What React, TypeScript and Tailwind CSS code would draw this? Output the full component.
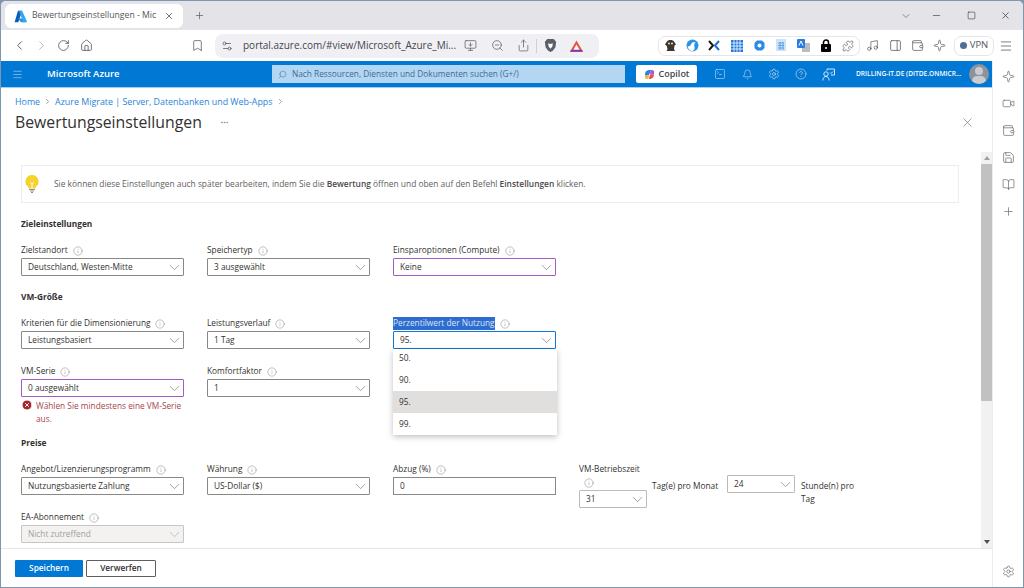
import type { ReactNode } from "react";
import {
  Bell,
  Bookmark,
  BookOpen,
  ChevronDown,
  ChevronLeft,
  ChevronRight,
  CircleHelp,
  Info,
  Menu,
  Minus,
  Music,
  PanelRight,
  Plus,
  Puzzle,
  RotateCw,
  Save,
  Search,
  Settings,
  Settings2,
  Share,
  Square,
  SquareTerminal,
  Video,
  Wallet,
  X,
  XCircle,
  ZoomOut,
  House,
  MonitorDown,
  Ellipsis,
  Sparkle,
} from "lucide-react";

const font = "font-['Open_Sans','Noto_Sans',sans-serif]";

function AzureLogo({ size = 14 }: { size?: number }) {
  return (
    <svg width={size} height={size} viewBox="0 0 18 18">
      <path d="M6.2 1h5.3L6 17H1.9a.9.9 0 0 1-.8-1.2L5.3 1.6A.9.9 0 0 1 6.2 1z" fill="#0a5fb4" />
      <path d="M13.9 11.9H5.5l4.3 5.1H16z" fill="#1f8fe6" />
      <path d="M11.6 1.6A.9.9 0 0 0 10.8 1H6.4a.9.9 0 0 1 .8.6l4.2 11.8 1 2.9a.9.9 0 0 1-.2.7h4.9a.9.9 0 0 0 .8-1.2z" fill="#35a6f0" />
    </svg>
  );
}

function CopilotLogo() {
  return (
    <svg width="11" height="11" viewBox="0 0 12 12">
      <path d="M1 6a5 5 0 0 1 5-5h2L5 7H1z" fill="#2f7fe0" />
      <path d="M8 1h1a2 2 0 0 1 2 2v3H6z" fill="#a65ad8" />
      <path d="M1 7h5l-2 4H3a2 2 0 0 1-2-2z" fill="#f2b632" />
      <path d="M7 6h4a5 5 0 0 1-5 5H5z" fill="#e8553f" />
    </svg>
  );
}

function BraveLogo() {
  return (
    <svg width="13" height="15" viewBox="0 0 14 16">
      <path d="M3.5 1h7l1.6 2 1 1-.8 6-2.8 3.6L7 15l-2.5-1.4L1.7 10 .9 4l1-1z" fill="#5b6068" />
      <path d="M4.5 5.5 7 6.5l2.5-1L9 9l-2 2.5L5 9z" fill="#fff" />
    </svg>
  );
}

function TriangleLogo() {
  return (
    <svg width="15" height="14" viewBox="0 0 16 14">
      <path d="M8 1 15 13H1z" fill="#e8553f" />
      <path d="M8 5.5 11.5 11.5h-7z" fill="#fff" />
      <path d="M1 13h14l-1.5-2h-11z" fill="#7a3ab0" />
    </svg>
  );
}

function ExtensionIcons() {
  return (
    <div className="ml-[59px] flex h-[20px] w-[202px] items-center rounded-[7px] border border-[#e6e6ea] bg-white pl-[1px]">
      <span className="flex w-[22px] justify-center">
        <svg width="13" height="13" viewBox="0 0 13 13">
          <path d="M3 2.5C4 .5 9 .5 10 2.5l2 3-1.500 1-.5 3.500 1 2H2.500l1-2L2.800 7 1 5.500z" fill="#3a3632" />
          <circle cx="5" cy="4.5" r="1" fill="#f3e3c6" />
          <circle cx="8" cy="4.5" r="1" fill="#f3e3c6" />
        </svg>
      </span>
      <span className="flex w-[22px] justify-center">
        <svg width="13" height="13" viewBox="0 0 13 13">
          <circle cx="6.5" cy="6.5" r="6" fill="#2a93e6" />
          <path d="M1.5 7.5C4 7.5 5 6 5.5 4.5 6 3 8 3 9.5 3.5 8 4.500 8 6.500 8.500 8c.4 1.500 0 3-2 4-2.500 0-4.500-1.800-5-4.500z" fill="#fff" />
        </svg>
      </span>
      <span className="flex w-[23px] justify-center">
        <svg width="12" height="11" viewBox="0 0 12 11" fill="none" strokeWidth="2">
          <path d="M1 1l4 4.5L1 10" stroke="#1b1b1b" />
          <path d="M11 1 7 5.5l4 4.5" stroke="#1a6fd0" />
        </svg>
      </span>
      <span className="flex w-[23px] justify-center">
        <svg width="12" height="12" viewBox="0 0 12 12">
          <rect width="12" height="12" fill="#1f78e0" />
          <path d="M3 0v12M6 0v12M9 0v12M0 3h12M0 6h12M0 9h12" stroke="#fff" strokeWidth=".8" />
        </svg>
      </span>
      <span className="flex w-[23px] justify-center">
        <svg width="11" height="11" viewBox="0 0 11 11">
          <path d="M3 .5h5L10.5 3v5L8 10.5H3L.5 8V3z" fill="#2a8be6" />
          <circle cx="5.5" cy="5.5" r="2" fill="#fff" />
        </svg>
      </span>
      <span className="flex w-[23px] justify-center">
        <svg width="11" height="13" viewBox="0 0 11 13">
          <rect width="10" height="12" fill="#cfe3f7" />
          <path d="M2 4h6M2 6.5h6M2 9h6M4 3v8M7 3v8" stroke="#5aa3e6" strokeWidth="1" />
        </svg>
      </span>
      <span className="flex w-[22px] justify-center">
        <svg width="13" height="13" viewBox="0 0 13 13">
          <rect x="5" y="4" width="8" height="9" fill="#b9bcc2" />
          <rect width="8" height="9" rx="1" fill="#2a7ce0" />
          <path d="M2 6.5 4 2l2 4.5" stroke="#fff" fill="none" />
        </svg>
      </span>
      <span className="flex w-[24px] justify-center">
        <svg width="10" height="13" viewBox="0 0 10 13">
          <path d="M2.5 6V3.5a2.500 2.500 0 0 1 5 0V6" fill="none" stroke="#000" strokeWidth="1.5" />
          <rect y="5" width="10" height="8" rx="1" fill="#000" />
          <circle cx="5" cy="9" r="1" fill="#fff" />
        </svg>
      </span>
      <span className="flex w-[22px] justify-center">
        <Puzzle size={12} strokeWidth={1.3} className="text-[#55575c]" />
      </span>
    </div>
  );
}

function Toolbar() {
  const cls = "text-[#55575c]";
  return (
    <div className="flex h-[31px] items-center bg-white pl-[11px]">
      <ChevronLeft size={15} strokeWidth={1.5} className={cls} />
      <ChevronRight size={15} strokeWidth={1.5} className="ml-[7px] text-[#b4b5b9]" />
      <RotateCw size={13} strokeWidth={1.5} className={`ml-[8px] ${cls}`} />
      <House size={13} strokeWidth={1.5} className={`ml-[10px] ${cls}`} />
      <Bookmark size={13} strokeWidth={1.4} className={`ml-[98px] ${cls}`} />
      <div className="ml-[11px] flex h-[24px] w-[384px] items-center rounded-[8px] bg-[#f0f0f4] pl-[6px]">
        <Settings2 size={12} strokeWidth={1.5} className={cls} />
        <span className={`ml-[10px] w-[217px] whitespace-nowrap text-[10px] text-[#44464b] ${font}`}>
          portal.azure.com/#view/Microsoft_Azure_Mi...
        </span>
        <MonitorDown size={13} strokeWidth={1.3} className={`ml-[4px] ${cls}`} />
        <ZoomOut size={13} strokeWidth={1.3} className={`ml-[14px] ${cls}`} />
        <Share size={13} strokeWidth={1.3} className={`ml-[13px] ${cls}`} />
        <span className="ml-[6px] h-[14px] w-px bg-[#d0d0d4]" />
        <span className="ml-[7px] flex"><BraveLogo /></span>
        <span className="ml-[12px] flex"><TriangleLogo /></span>
      </div>
      <ExtensionIcons />
      <Music size={13} strokeWidth={1.3} className={`ml-[6px] ${cls}`} />
      <PanelRight size={13} strokeWidth={1.4} className={`ml-[10px] ${cls}`} />
      <Wallet size={13} strokeWidth={1.3} className={`ml-[9px] ${cls}`} />
      <Sparkle size={13} strokeWidth={1.3} className={`ml-[9px] ${cls}`} />
      <div className={`ml-[8px] flex h-[20px] w-[40px] items-center justify-center gap-[3px] rounded-[7px] border border-[#e6e6ea] text-[9.5px] text-[#55575c] ${font}`}>
        <span className="h-[7px] w-[7px] rounded-full bg-[#4f6d96]" />
        VPN
      </div>
      <Menu size={14} strokeWidth={1.3} className={`ml-[5px] ${cls}`} />
    </div>
  );
}

function TabStrip() {
  return (
    <div className="flex h-[29px] items-center bg-[#e3e3e8]">
      <div className="ml-[4px] mt-[1px] flex h-[24px] w-[178px] items-center rounded-[6px] bg-white pl-[9px]">
        <AzureLogo size={13} />
        <span className={`ml-[5px] w-[128px] overflow-hidden whitespace-nowrap text-[8.7px] text-[#55575c] ${font}`}>
          Bewertungseinstellungen - Mic
        </span>
        <X size={10} strokeWidth={1.8} className="ml-[4px] text-[#44464b]" />
      </div>
      <Plus size={11} strokeWidth={1.5} className="ml-[11px] text-[#55575c]" />
      <div className="flex-1" />
      <ChevronDown size={12} strokeWidth={1.3} className="text-[#55575c]" />
      <Minus size={11} strokeWidth={1.3} className="ml-[19px] text-[#2e2f33]" />
      <Square size={9} strokeWidth={1.5} className="ml-[25px] text-[#2e2f33]" />
      <X size={11} strokeWidth={1.5} className="ml-[24px] mr-[12px] text-[#2e2f33]" />
    </div>
  );
}

function AzureBar() {
  return (
    <div className="flex h-[27px] items-center border-b border-[#a9cdec] bg-[#0078d4] text-white">
      <Menu size={11} strokeWidth={1.3} className="ml-[11px] text-[#bcd9f0]" />
      <span className={`ml-[24px] w-[225px] text-[9.5px] font-semibold ${font}`}>Microsoft Azure</span>
      <div className={`flex h-[18px] w-[353px] items-center bg-[#b3d6f2] pl-[6px] text-[8.3px] text-[#3d6c92] ${font}`}>
        <Search size={9} strokeWidth={1.3} className="-scale-x-100" />
        <span className="ml-[5px]">Nach Ressourcen, Diensten und Dokumenten suchen (G+/)</span>
      </div>
      <div className={`ml-[11px] flex h-[18px] w-[61px] items-center justify-center gap-[4px] rounded-[2px] bg-white text-[9px] font-semibold text-[#41464d] ${font}`}>
        <CopilotLogo />
        Copilot
      </div>
      <SquareTerminal size={12} strokeWidth={1.1} className="ml-[17px] text-[#d6e8f7]" />
      <Bell size={11} strokeWidth={1.2} className="ml-[16px] text-[#d6e8f7]" />
      <Settings size={12} strokeWidth={1.2} className="ml-[15px] text-[#d6e8f7]" />
      <CircleHelp size={12} strokeWidth={1.2} className="ml-[15px] text-[#d6e8f7]" />
      <svg width="13" height="13" viewBox="0 0 13 13" fill="none" stroke="#d6e8f7" className="ml-[15px]">
        <circle cx="4" cy="6" r="2.2" />
        <path d="M.8 12.5c.3-3 1.5-4 3.2-4s2.9 1 3.2 4M5 2.5V1h7.5v6H9" />
        <path d="m8 4.5 1 1 2-2" />
      </svg>
      <span className={`ml-[21px] w-[105px] whitespace-nowrap text-right text-[6.6px] font-semibold ${font}`}>
        DRILLING-IT.DE (DITDE.ONMICR...
      </span>
      <div className="relative ml-[8px] h-[20px] w-[20px] overflow-hidden rounded-full bg-[#8d939b]">
        <div className="absolute left-[6px] top-[3px] h-[8px] w-[8px] rounded-full bg-[#c9ccd1]" />
        <div className="absolute left-[3px] top-[12px] h-[10px] w-[14px] rounded-full bg-[#c9ccd1]" />
      </div>
    </div>
  );
}

function FieldLabel({ children }: { children: ReactNode }) {
  return (
    <div className="flex h-[15px] items-center gap-[5px] whitespace-nowrap text-[8.3px] text-[#323130]">
      {children}
      <Info size={10} strokeWidth={1.1} className="shrink-0 text-[#777]" />
    </div>
  );
}

function Select({
  value,
  border = "border-[#8a8886]",
  disabled = false,
  width = "w-[163px]",
}: {
  value: string;
  border?: string;
  disabled?: boolean;
  width?: string;
}) {
  return (
    <div
      className={`flex h-[18px] ${width} items-center justify-between rounded-[1px] border ${border} pl-[6px] text-[8.3px] ${
        disabled ? "bg-[#f3f2f1] text-[#a19f9d]" : "bg-white text-[#323130]"
      }`}
    >
      <span className="whitespace-nowrap">{value}</span>
      <ChevronDown size={17} strokeWidth={0.8} className={disabled ? "text-[#a19f9d]" : "text-[#605e5c]"} />
    </div>
  );
}

function Field({ label, value, border }: { label: string; value: string; border?: string }) {
  return (
    <div className="w-[163px]">
      <FieldLabel>{label}</FieldLabel>
      <Select value={value} border={border} />
    </div>
  );
}

function Heading({ children, className }: { children: ReactNode; className: string }) {
  return <h2 className={`h-[12px] text-[8.3px] font-bold leading-[12px] text-[#323130] ${className}`}>{children}</h2>;
}

function PercentileField() {
  return (
    <div className="relative w-[163px]">
      <div className="flex h-[15px] items-center gap-[5px] whitespace-nowrap text-[8.3px]">
        <span className="bg-[#2f6ccf] text-[#dbe6f5]">Perzentilwert der Nutzung</span>
        <Info size={10} strokeWidth={1.1} className="shrink-0 text-[#777]" />
      </div>
      <Select value="95." border="border-[#0f78d4]" />
      <ul className="absolute left-0 top-[33px] z-10 w-[164px] bg-white text-[8.3px] text-[#323130] shadow-[0_2px_6px_rgba(0,0,0,0.25)]">
        <li className="flex h-[20px] items-start pl-[6px] pt-[3px]">50.</li>
        <li className="flex h-[22px] items-center pl-[6px]">90.</li>
        <li className="flex h-[22px] items-center bg-[#e1dfdd] pl-[6px]">95.</li>
        <li className="flex h-[22px] items-center pl-[6px]">99.</li>
      </ul>
    </div>
  );
}

function Form() {
  return (
    <div className={`min-w-0 flex-1 overflow-hidden pl-[20px] pt-[13px] ${font}`}>
      <div className="flex h-[38px] w-[938px] items-center border border-[#eeeded] pl-[3px] text-[8.4px] text-[#605e5c]">
        <svg width="14" height="18" viewBox="0 0 14 18" className="shrink-0">
          <path d="M7 0a6.5 6.5 0 0 0-3.5 12v1.5h7V12A6.5 6.5 0 0 0 7 0z" fill="#f8d22a" />
          <path d="M5 7l2 2 2-2M7 9v4" fill="none" stroke="#fff" />
          <path d="M4 14.5h6M5 16h4M6 17.5h2" stroke="#8f8f8f" />
        </svg>
        <span className="ml-[15px]">
          Sie können diese Einstellungen auch später bearbeiten, indem Sie die <b className="font-semibold text-[#4a4a4a]">Bewertung</b> öffnen und oben auf den Befehl <b className="font-semibold text-[#4a4a4a]">Einstellungen</b> klicken.
        </span>
      </div>

      <Heading className="mt-[15px]">Zieleinstellungen</Heading>
      <div className="mt-[13px] flex gap-[23px]">
        <Field label="Zielstandort" value="Deutschland, Westen-Mitte" />
        <Field label="Speichertyp" value="3 ausgewählt" />
        <Field label="Einsparoptionen (Compute)" value="Keine" border="border-[#a55bc4]" />
      </div>

      <Heading className="mt-[15px]">VM-Größe</Heading>
      <div className="mt-[13px] flex gap-[23px]">
        <Field label="Kriterien für die Dimensionierung" value="Leistungsbasiert" />
        <Field label="Leistungsverlauf" value="1 Tag" />
        <PercentileField />
      </div>

      <div className="mt-[15px] flex gap-[23px]">
        <div className="w-[163px]">
          <FieldLabel>VM-Serie</FieldLabel>
          <Select value="0 ausgewählt" border="border-[#a55bc4]" />
          <div className="mt-[2px] flex gap-[3px] text-[8.3px] leading-[13px]">
            <XCircle size={12} fill="#a4262c" stroke="#fff" strokeWidth={2} className="shrink-0" />
            <p className="text-[#a4464c]">
              <span className="block whitespace-nowrap">Wählen Sie mindestens eine VM-Serie</span>
              <span className="block">aus.</span>
            </p>
          </div>
        </div>
        <Field label="Komfortfaktor" value="1" />
      </div>

      <Heading className="mt-[12px]">Preise</Heading>
      <div className="mt-[13px] flex h-[33px] gap-[23px]">
        <Field label="Angebot/Lizenzierungsprogramm" value="Nutzungsbasierte Zahlung" />
        <Field label="Währung" value="US-Dollar ($)" />
        <div className="w-[163px]">
          <FieldLabel>Abzug (%)</FieldLabel>
          <div className="flex h-[18px] w-[163px] items-center border border-[#8a8886] pl-[6px] text-[8.3px] text-[#323130]">0</div>
        </div>
        <div className="flex items-start text-[8.3px] text-[#323130]">
          <div className="w-[68px]">
            <div className="flex h-[14px] items-center whitespace-nowrap">VM-Betriebszeit</div>
            <div className="flex h-[14px] items-center pl-[5px]">
              <Info size={10} strokeWidth={1.1} className="text-[#777]" />
            </div>
            <Select value="31" width="w-[68px]" border="border-[#bdbbb8]" />
          </div>
          <span className="ml-[5px] mt-[17px] w-[75px] whitespace-nowrap leading-[13px]">Tag(e) pro Monat</span>
          <div className="mt-[13px]">
            <Select value="24" width="w-[68px]" border="border-[#bdbbb8]" />
          </div>
          <span className="ml-[6px] mt-[17px] w-[60px] leading-[13px]">Stunde(n) pro Tag</span>
        </div>
      </div>

      <div className="mt-[15px] w-[163px]">
        <FieldLabel>EA-Abonnement</FieldLabel>
        <Select value="Nicht zutreffend" border="border-[#c8c6c4]" disabled />
      </div>
    </div>
  );
}

function Scrollbar() {
  return (
    <div className="flex w-[11px] flex-col items-center bg-[#f1f1f1]">
      <div className="mt-[4px] h-0 w-0 border-x-[3px] border-b-[4px] border-x-transparent border-b-[#a0a0a0]" />
      <div className="mt-[4px] h-[237px] w-full bg-[#c1c1c1]" />
      <div className="flex-1" />
      <div className="mb-[4px] h-0 w-0 border-x-[3px] border-t-[4px] border-x-transparent border-t-[#505050]" />
    </div>
  );
}

function SideRail() {
  const cls = "text-[#66686d]";
  return (
    <div className="flex w-[31px] flex-col items-center border-l border-[#ececec] bg-white pt-[9px]">
      <Sparkle size={13} strokeWidth={1.3} className={cls} />
      <Video size={13} strokeWidth={1.3} className={`mt-[14px] ${cls}`} />
      <Wallet size={13} strokeWidth={1.3} className={`mt-[14px] ${cls}`} />
      <Save size={13} strokeWidth={1.3} className={`mt-[14px] ${cls}`} />
      <BookOpen size={13} strokeWidth={1.3} className={`mt-[14px] ${cls}`} />
      <Plus size={13} strokeWidth={1.3} className={`mt-[14px] ${cls}`} />
      <div className="flex-1" />
      <Settings size={13} strokeWidth={1.3} className={`mb-[9px] ${cls}`} />
    </div>
  );
}

export default function App() {
  return (
    <div className="h-[588px] w-[1024px] overflow-hidden bg-[#7d97b3]">
      <div className="flex h-[587px] flex-col overflow-hidden rounded-t-[6px] border-l border-t border-r border-[#7d97b3] bg-white">
        <TabStrip />
        <Toolbar />
        <div className="flex min-h-0 flex-1">
          <div className="flex min-w-0 flex-1 flex-col">
            <AzureBar />
            <div className={`h-[64px] shrink-0 ${font}`}>
              <div className="flex h-[20px] items-end pl-[14px] text-[8.9px] text-[#1f86d6]">
                <span>Home</span>
                <ChevronRight size={9} className="mx-[3px] mb-[2px] text-[#8a8886]" />
                <span>Azure Migrate | Server, Datenbanken und Web-Apps</span>
                <ChevronRight size={9} className="ml-[3px] mb-[2px] text-[#8a8886]" />
              </div>
              <div className="mt-[2px] flex items-center pl-[14px] pr-[17px]">
                <h1 className="text-[15.8px] font-medium leading-[24px] text-[#323130]">Bewertungseinstellungen</h1>
                <Ellipsis size={9} className="ml-[18px] text-[#8a8886]" />
                <div className="flex-1" />
                <X size={15} strokeWidth={0.9} className="text-[#605e5c]" />
              </div>
            </div>
            <div className="flex min-h-0 flex-1">
              <Form />
              <Scrollbar />
            </div>
            <div className={`flex h-[39px] shrink-0 items-center gap-[3px] border-t border-[#e6e6e6] pl-[14px] text-[8.3px] ${font}`}>
              <button className="h-[17px] w-[68px] rounded-[1px] bg-[#0078d4] font-semibold text-white">Speichern</button>
              <button className="h-[17px] w-[70px] rounded-[1px] border border-[#605e5c] bg-white font-semibold text-[#323130]">Verwerfen</button>
            </div>
          </div>
          <SideRail />
        </div>
      </div>
    </div>
  );
}
